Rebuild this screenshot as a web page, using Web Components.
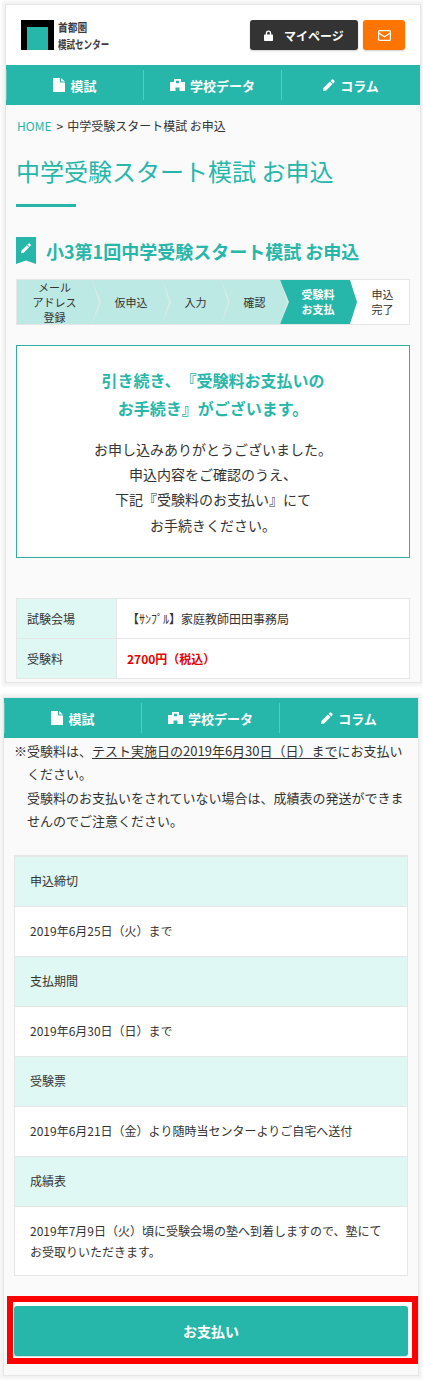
<!DOCTYPE html>
<html lang="ja">
<head>
<meta charset="utf-8">
<title>中学受験スタート模試 お申込</title>
<style>
  html, body { margin: 0; padding: 0; background: #fff; }
  body {
    font-family: "Noto Sans CJK JP", "Noto Sans", sans-serif;
    color: #333;
    width: 423px;
    height: 1380px;
    overflow: hidden;
    text-spacing-trim: space-all;
    font-feature-settings: "chws" 0;
  }
</style>
</head>
<body>

<shot-panel style="margin: 5px 0 0 6px; height: 677px;">
  <site-header></site-header>
  <site-nav></site-nav>
  <bread-crumb></bread-crumb>
  <page-title>中学受験スタート模試 お申込</page-title>
  <sub-title>小3第1回中学受験スタート模試 お申込</sub-title>
  <step-bar></step-bar>
  <notice-box></notice-box>
  <summary-table></summary-table>
</shot-panel>

<shot-panel style="margin: 16px 0 0 4px; height: 677px;">
  <site-nav></site-nav>
  <pay-note></pay-note>
  <date-list></date-list>
  <pay-button>お支払い</pay-button>
</shot-panel>

<script>
const ICONS = {
  file: '<svg viewBox="0 0 12 14" width="12" height="14"><path fill="#fff" d="M0 0h7v4.5h5V14H0zM8 0l4 3.5H8z"/></svg>',
  school: '<svg viewBox="0 0 15 12" width="15" height="12"><path fill="#fff" d="M4 0h7v3h4v9H9.5V8.5h-4V12H0V3h4zM6 1.7v2.6h3V1.7z"/></svg>',
  pencil: '<svg viewBox="0 0 12 12" width="12" height="12"><path fill="#fff" d="M8.6.8a1.3 1.3 0 0 1 1.8 0l.8.8a1.3 1.3 0 0 1 0 1.8l-1 1L7.6 1.8zM6.9 2.5l2.6 2.6L3.2 11.4 0 12l.6-3.2z"/></svg>',
  lock: '<svg viewBox="0 0 10 12" width="9" height="11"><path fill="#fff" d="M2 5V3.4a3 3 0 0 1 6 0V5h1.2c.4 0 .8.3.8.8v5.4c0 .5-.4.8-.8.8H.8c-.5 0-.8-.3-.8-.8V5.800c0-.5.3-.8.8-.8zm1.500 0h3V3.400a1.500 1.500 0 0 0-3 0z"/></svg>',
  mail: '<svg viewBox="0 0 13 11" width="13" height="11" fill="none" stroke="#fff" stroke-width="1.200"><rect x=".6" y=".6" width="11.800" height="9.800" rx="1"/><path d="M.8 3l5.700 3.800L12.200 3"/></svg>'
};

function define(name, css, html) {
  customElements.define(name, class extends HTMLElement {
    constructor() {
      super();
      this.attachShadow({mode: 'open'});
      this.shadowRoot.innerHTML = `<style>${css}</style>${html}`;
    }
  });
}

define('shot-panel', `
  :host {
    display: block;
    width: 414px;
    box-sizing: border-box;
    background: #fafafa;
    box-shadow: 0 0 0 1px #e6e6e6, 0 0 3px 4px #f2f2f2;
    overflow: hidden;
  }
`, '<slot></slot>');

define('site-header', `
  :host { display: flex; align-items: flex-start; height: 60px; background: #fff; box-sizing: border-box; padding: 15px 15px 0 15px; }
  .mark { width: 33px; height: 30px; background: #000; flex: none; display: flex; justify-content: center; align-items: flex-end; }
  .mark i { display: block; width: 21px; height: 23px; background: #26b7aa; }
  .name { margin: -2px 0 0 4px; color: #3c3c3c; font-weight: 700; font-size: 11.700px; line-height: 17px; white-space: nowrap; width: 60px; }
  .name span { display: block; transform-origin: left center; }
  .a { transform: scaleX(.83); }
  .b { transform: scaleX(.73); }
  .btns { margin-left: auto; display: flex; gap: 5px; }
  .btn { height: 30px; border-radius: 3px; display: flex; align-items: center; justify-content: center; color: #fff; font-weight: 700; font-size: 12px; box-shadow: 0 1px 2px rgba(0,0,0,.2); }
  .my { width: 108px; background: #333; gap: 11px; }
  .ml { width: 42px; background: #ff7500; }
`, `
  <div class="mark"><i></i></div>
  <div class="name"><span class="a">首都圏</span><span class="b">模試センター</span></div>
  <div class="btns">
    <div class="btn my">${ICONS.lock}<span>マイページ</span></div>
    <div class="btn ml">${ICONS.mail}</div>
  </div>
`);

define('site-nav', `
  :host { display: grid; grid-template-columns: 137px 138px 139px; height: 40px; background: #26b7aa; align-items: center; }
  div { height: 30px; display: flex; align-items: center; justify-content: center; gap: 5px; color: #fff; font-size: 13px; font-weight: 700; border-left: 1px solid rgba(255,255,255,.25); }
  div:first-child { border-left: 0; }
`, `
  <div>${ICONS.file}<span>模試</span></div>
  <div>${ICONS.school}<span>学校データ</span></div>
  <div>${ICONS.pencil}<span>コラム</span></div>
`);

define('bread-crumb', `
  :host { display: block; padding: 12px 10px 0 11px; font-size: 12px; line-height: 17px; color: #333; height: 17px; }
  a { color: #26b7aa; }
  i { font-style: normal; margin: 0 4px 0 5px; }
`, `<a>HOME</a><i>&gt;</i>中学受験スタート模試 お申込`);

define('page-title', `
  :host { display: block; margin: 0 10px; padding-top: 19px; color: #26b7aa; font-size: 24px; line-height: 36px; }
  :host::after { content: ""; display: block; width: 60px; height: 3px; background: #26b7aa; margin-top: 15px; }
`, '<slot></slot>');

define('sub-title', `
  :host { display: flex; align-items: center; gap: 10px; margin: 30px 10px 0; height: 27px; color: #26b7aa; font-size: 18px; font-weight: 700; white-space: nowrap; }
  .tag { width: 20px; height: 27px; flex: none; }
`, `
  <svg class="tag" viewBox="0 0 20 27"><path fill="#26b7aa" d="M0 0h20v27l-10-3.500L0 27z"/><path fill="#fff" transform="translate(5 6) scale(.85)" d="M8.600.8a1.300 1.300 0 0 1 1.800 0l.8.8a1.300 1.300 0 0 1 0 1.800l-1 1L7.600 1.800zM6.900 2.500l2.600 2.600L3.200 11.400 0 12l.6-3.200z"/></svg>
  <span><slot></slot></span>
`);

define('step-bar', `
  :host { display: flex; margin: 15px 10px 0; height: 46px; box-sizing: border-box; border: 1px solid #e6e6e6; background: #fff; font-size: 11px; line-height: 15px; color: #333; }
  .s { position: relative; display: flex; align-items: center; justify-content: center; text-align: center; background: #bce9e3; box-sizing: border-box; }
  .s::before, .s::after { content: ""; position: absolute; top: 0; bottom: 0; clip-path: polygon(0 0, 100% 50%, 0 100%); }
  .s::before { right: -9px; width: 9px; background: #dbeae7; z-index: 1; }
  .s::after { right: -7px; width: 7px; background: #bce9e3; z-index: 2; }
  .pad { padding-left: 8px; }
  .on { background: #26b7aa; color: #fff; font-weight: 700; padding-left: 6px; }
  .on::before { display: none; }
  .on::after { background: #26b7aa; }
  .end { background: #fff; flex: 1; padding-left: 6px; }
  .end::before, .end::after { display: none; }
`, `
  <div class="s" style="width:75px">メール<br>アドレス<br>登録</div>
  <div class="s pad" style="width:70px">仮申込</div>
  <div class="s pad" style="width:59px">入力</div>
  <div class="s pad" style="width:59px">確認</div>
  <div class="s on" style="width:70px">受験料<br>お支払</div>
  <div class="s end">申込<br>完了</div>
`);

define('notice-box', `
  :host { display: block; margin: 20px 10px 0; height: 213px; box-sizing: border-box; border: 1px solid #2fae9f; background: #fff; text-align: center; padding-top: 20px; }
  h2 { margin: 0 0 15px; color: #26b7aa; font-size: 16px; font-weight: 700; line-height: 28px; }
  p { margin: 0; color: #333; font-size: 14px; line-height: 25.200px; }
`, `
  <h2>引き続き、『受験料お支払いの<br>お手続き』がございます。</h2>
  <p>お申し込みありがとうございました。<br>申込内容をご確認のうえ、<br>下記『受験料のお支払い』にて<br>お手続きください。</p>
`);

define('summary-table', `
  :host { display: grid; grid-template-columns: 100px 1fr; grid-template-rows: 39px 40px; margin: 40px 10px 0; box-sizing: border-box; border: 1px solid #e6e6e6; font-size: 12px; background: #fff; color: #333; }
  div { display: flex; align-items: center; box-sizing: border-box; }
  .h { background: #dff8f3; padding-left: 10px; border-right: 1px solid #e6e6e6; }
  .d { padding-left: 10px; }
  .r { border-top: 1px solid #e6e6e6; }
  b { color: #e60000; font-weight: 700; }
`, `
  <div class="h">試験会場</div><div class="d">【ｻﾝﾌﾟﾙ】家庭教師田田事務局</div>
  <div class="h r">受験料</div><div class="d r"><b>2700円（税込）</b></div>
`);

define('pay-note', `
  :host { display: block; padding: 1px 10px 0; font-size: 13px; line-height: 23.400px; color: #333; }
  p { margin: 0; }
  .in { padding-left: 13px; }
  u { text-underline-offset: 2px; }
`, `
  <p>※受験料は、<u>テスト実施日の2019年6月30日（日）まで</u>にお支払い</p>
  <p class="in">ください。</p>
  <p class="in">受験料のお支払いをされていない場合は、成績表の発送ができま</p>
  <p class="in">せんのでご注意ください。</p>
`);

define('date-list', `
  :host { display: block; margin: 22px 10px 0; box-sizing: border-box; border: 1px solid #e6e6e6; background: #fff; font-size: 12px; line-height: 21px; color: #333; }
  div { box-sizing: border-box; padding: 13px 15px 15px; border-top: 1px solid #e6e6e6; }
  div:first-child { border-top: 0; }
  div:last-child { padding-bottom: 13px; }
  .h { background: #dff8f3; }
`, `
  <div class="h">申込締切</div><div>2019年6月25日（火）まで</div>
  <div class="h">支払期間</div><div>2019年6月30日（日）まで</div>
  <div class="h">受験票</div><div>2019年6月21日（金）より随時当センターよりご自宅へ送付</div>
  <div class="h">成績表</div><div>2019年7月9日（火）頃に受験会場の塾へ到着しますので、塾にて<br>お受取りいただきます。</div>
`);

define('pay-button', `
  :host { display: block; margin: 20px 0 0 3px; width: 411px; box-sizing: border-box; border: 6px solid #f00; background: #fff; padding: 4px 4px 2px 1px; }
  div { height: 50px; border-radius: 3px; background: #26b7aa; color: #fff; font-size: 14px; font-weight: 700; display: flex; align-items: center; justify-content: center; box-shadow: 0 1px 1px rgba(0,0,0,.15); }
`, '<div><slot></slot></div>');
</script>
</body>
</html>
